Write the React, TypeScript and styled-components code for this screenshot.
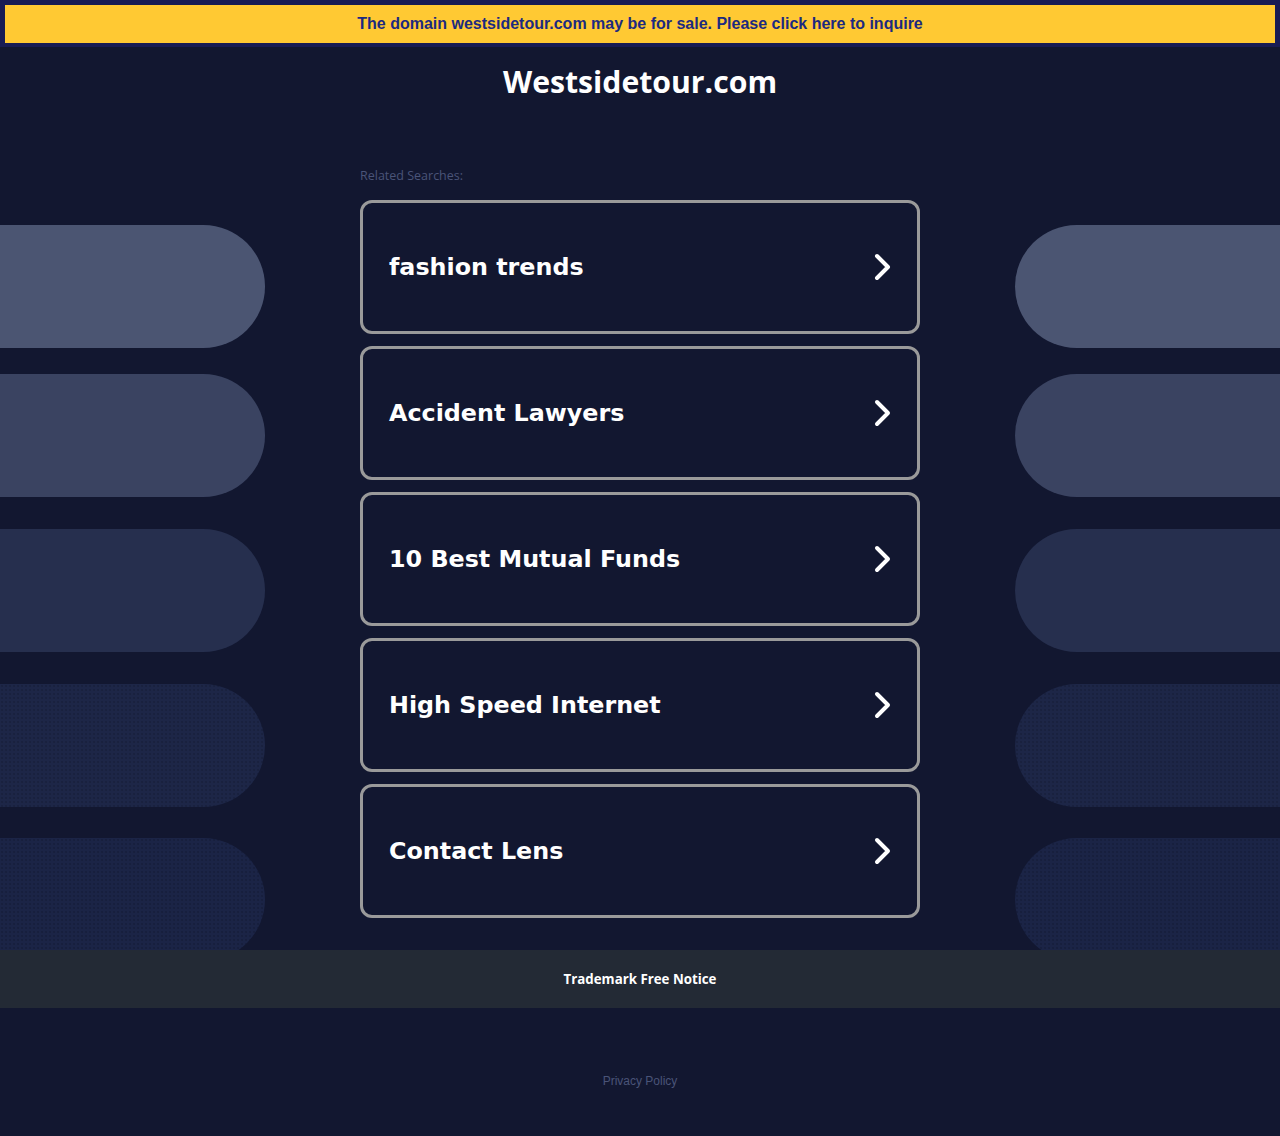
import React from "react";
import styled, { createGlobalStyle, css } from "styled-components";

const GlobalStyle = createGlobalStyle`
  html, body { margin: 0; padding: 0; background: #121730; }
  body { font-family: "Liberation Sans", Arial, sans-serif; }
  * { box-sizing: border-box; }
`;

const Page = styled.div`
  width: 1280px;
  min-height: 1136px;
  background: #121730;
  display: flex;
  flex-direction: column;
`;

const BannerFrame = styled.div`
  background: #181c54;
  padding: 5px 5px 4px;
`;

const Banner = styled.a`
  display: flex;
  align-items: center;
  justify-content: center;
  height: 38px;
  background: #ffc933;
  color: #1c2a80;
  font-family: "Liberation Sans", Arial, sans-serif;
  font-weight: 700;
  font-size: 16px;
  text-decoration: none;
`;

const Main = styled.main`
  display: grid;
  grid-template-columns: 265px 560px 265px;
  column-gap: 95px;
  height: 903px;
  overflow: hidden;
`;

const PillColumn = styled.div`
  display: flex;
  flex-direction: column;
  padding-top: 178px;
`;

const dotted = css`
  background-image: radial-gradient(rgba(10, 14, 35, 0.35) 0.6px, transparent 0.9px);
  background-size: 4px 4px;
`;

const Pill = styled.div<{ $color: string; $offset: number; $side: "left" | "right"; $dots?: boolean }>`
  flex: none;
  height: 123px;
  margin-top: ${(p) => p.$offset}px;
  background-color: ${(p) => p.$color};
  ${(p) => (p.$dots ? dotted : "")}
  border-radius: ${(p) => (p.$side === "left" ? "0 62px 62px 0" : "62px 0 0 62px")};
`;

const Center = styled.div`
  display: flex;
  flex-direction: column;
`;

const Title = styled.h1`
  margin: 0;
  padding-top: 15px;
  height: 72px;
  text-align: center;
  color: #ffffff;
  font-family: "Open Sans", sans-serif;
  font-weight: 700;
  font-size: 30.2px;
  line-height: 40px;
`;

const Related = styled.div`
  margin-top: 50px;
  color: #4a5478;
  font-family: "Open Sans", sans-serif;
  font-size: 12.5px;
  line-height: 14px;
`;

const CardList = styled.div`
  margin-top: 17px;
  display: flex;
  flex-direction: column;
  gap: 12px;
`;

const Card = styled.a`
  display: flex;
  align-items: center;
  justify-content: space-between;
  height: 134px;
  padding: 0 24px 0 26px;
  border: 3px solid #9a9a9a;
  border-radius: 12px;
  color: #ffffff;
  text-decoration: none;
  font-family: "DejaVu Sans", Verdana, sans-serif;
  font-weight: 700;
  font-size: 23.8px;
`;

const Chevron = styled.svg`
  flex: none;
  width: 20px;
  height: 32px;
`;

const FooterBar = styled.div`
  height: 58px;
  display: flex;
  align-items: center;
  justify-content: center;
  background: #232a35;
  color: #ffffff;
  font-family: "Open Sans", sans-serif;
  font-weight: 700;
  font-size: 13.3px;
`;

const Bottom = styled.div`
  flex: 1;
  display: flex;
  justify-content: center;
  padding-top: 66px;
`;

const Privacy = styled.a`
  color: #4a5478;
  font-family: "Liberation Sans", Arial, sans-serif;
  font-size: 12px;
  text-decoration: none;
`;

const pills = [
  { color: "#4b5572", offset: 0 },
  { color: "#3a4361", offset: 26 },
  { color: "#262f4e", offset: 32 },
  { color: "#1d2647", offset: 32, dots: true },
  { color: "#1b2446", offset: 31, dots: true },
];

const items = [
  "fashion trends",
  "Accident Lawyers",
  "10 Best Mutual Funds",
  "High Speed Internet",
  "Contact Lens",
];

function Pills({ side }: { side: "left" | "right" }) {
  return (
    <PillColumn>
      {pills.map((p, i) => (
        <Pill key={i} $color={p.color} $offset={p.offset} $side={side} $dots={p.dots} />
      ))}
    </PillColumn>
  );
}

export default function App() {
  return (
    <Page>
      <GlobalStyle />
      <BannerFrame>
        <Banner href="#">The domain westsidetour.com may be for sale. Please click here to inquire</Banner>
      </BannerFrame>
      <Main>
        <Pills side="left" />
        <Center>
          <Title>Westsidetour.com</Title>
          <Related>Related Searches:</Related>
          <CardList>
            {items.map((t) => (
              <Card key={t} href="#">
                <span>{t}</span>
                <Chevron viewBox="0 0 20 32">
                  <polyline
                    points="4,5 15,16 4,27"
                    fill="none"
                    stroke="#ffffff"
                    strokeWidth="4"
                    strokeLinecap="round"
                    strokeLinejoin="round"
                  />
                </Chevron>
              </Card>
            ))}
          </CardList>
        </Center>
        <Pills side="right" />
      </Main>
      <FooterBar>Trademark Free Notice</FooterBar>
      <Bottom>
        <Privacy href="#">Privacy Policy</Privacy>
      </Bottom>
    </Page>
  );
}
